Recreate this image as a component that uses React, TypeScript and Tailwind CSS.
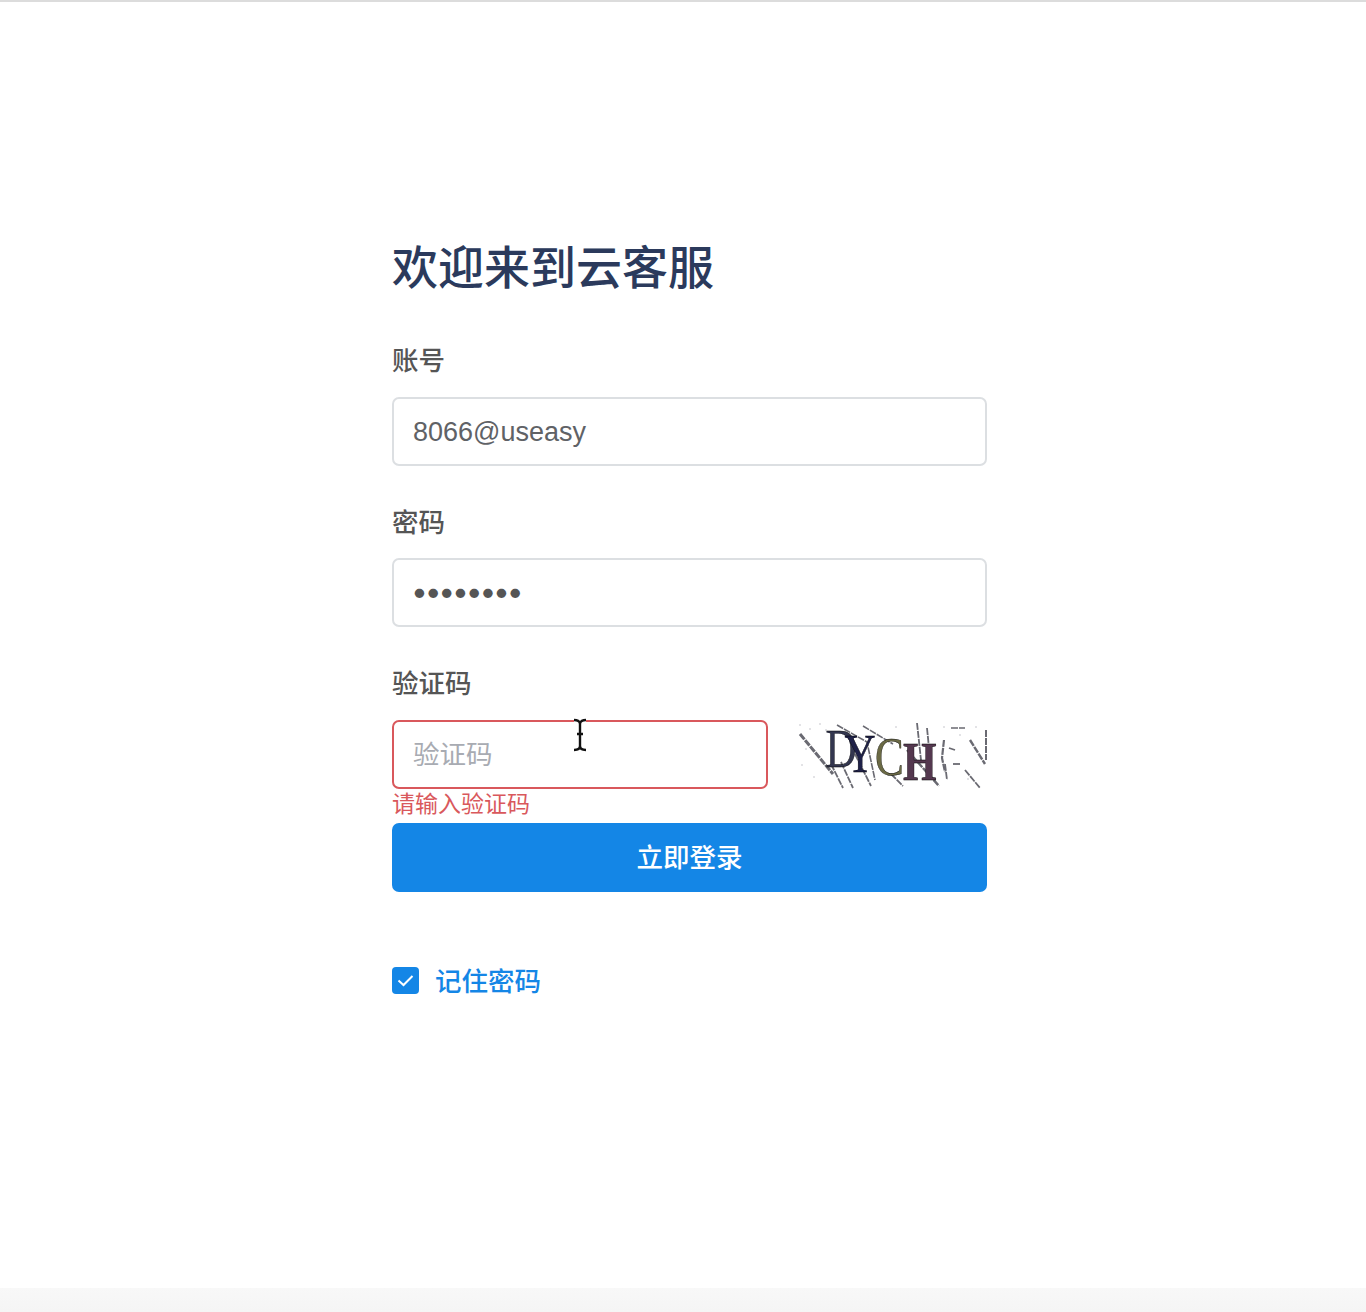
import React from 'react';

const FONT = '"Noto Sans CJK SC", "Liberation Sans", sans-serif';
const LATIN = '"Liberation Sans", sans-serif';

const Captcha: React.FC = () => (
  <svg width="192" height="69" viewBox="0 0 192 69" className="block blur-[0.7px]">
    {/* noise lines */}
    <g stroke="#6a6a72" fill="none" strokeWidth="1.8" strokeDasharray="7 1">
      <path d="M5 14 L38 54" strokeWidth="3" />
      <path d="M42 5 L72 22 L80 60" strokeWidth="1.6" />
      <path d="M68 6 L98 24" strokeWidth="1.6" />
      <path d="M36 44 L48 68" />
      <path d="M46 42 L58 68" />
      <path d="M60 34 L76 66" />
      <path d="M96 54 L108 66" />
      <path d="M122 3 L126 40" />
      <path d="M132 8 L136 48" />
      <path d="M112 30 L144 66" strokeWidth="2.4" />
      <path d="M158 44 H166" />
      <path d="M149 20 L147 38 L150 52" strokeWidth="2.2" />
      <path d="M150 44 L152 60" />
      <path d="M156 8 H170" strokeWidth="1.4" />
      <path d="M154 28 L160 30" />
      <path d="M175 20 L190 44" strokeWidth="2.4" />
      <path d="M191 10 V40" strokeWidth="2" />
      <path d="M170 50 L185 68" />
    </g>
    <g fill="#dcdce0" opacity="0.8">
      <rect x="4" y="4" width="2" height="2" /><rect x="14" y="8" width="2" height="2" /><rect x="24" y="3" width="2" height="2" />
      <rect x="10" y="28" width="2" height="2" /><rect x="6" y="44" width="2" height="2" /><rect x="18" y="56" width="2" height="2" />
      <rect x="148" y="6" width="2" height="2" /><rect x="180" y="6" width="2" height="2" /><rect x="172" y="58" width="2" height="2" />
      <rect x="30" y="9" width="2" height="2" /><rect x="100" y="6" width="2" height="2" /><rect x="164" y="14" width="2" height="2" />
    </g>
    <g transform="scale(0.8 1)" fontFamily='"Liberation Serif", serif' fontSize="54">
      <text x="38 62 100 135" y="47 52 55 60" stroke="currentColor" strokeWidth="0.4">
        <tspan fill="#33364f">D</tspan>
        <tspan fill="#1f2148">Y</tspan>
        <tspan fill="#6b6a45">C</tspan>
        <tspan fill="#54384f" fontWeight="700">H</tspan>
      </text>
    </g>
  </svg>
);

const App: React.FC = () => {
  return (
    <div className="min-h-[1312px] bg-white flex flex-col" style={{ fontFamily: FONT }}>
      <div className="h-[2px] bg-[#dcdcdc]" />
      <main className="flex-1 pl-[392px] pt-[232px]">
        <div className="w-[595px]">
          <h1 className="text-[46px] leading-[60px] font-medium text-[#2b3a5c] whitespace-nowrap">欢迎来到云客服</h1>

          <label className="block mt-[45px] text-[26.5px] leading-[40px] font-medium text-[#555]">账号</label>
          <input
            readOnly
            value="8066@useasy"
            className="block mt-[18px] w-full h-[69px] px-[19px] pt-[2px] border-2 border-[#dcdfe2] rounded-[7px] text-[27px] text-[#606266] outline-none"
            style={{ fontFamily: LATIN }}
          />

          <label className="block mt-[35px] text-[26.5px] leading-[40px] font-medium text-[#555]">密码</label>
          <input
            readOnly
            type="password"
            value="12345678"
            className="block mt-[17px] w-full h-[69px] pl-[17px] pr-[19px] pb-[4px] border-2 border-[#dcdfe2] rounded-[7px] text-[30px] tracking-[-3.2px] text-[#555] outline-none"
            style={{ fontFamily: '"Inter", sans-serif' }}
          />

          <label className="block mt-[35px] text-[26.5px] leading-[40px] font-medium text-[#555]">验证码</label>
          <div className="mt-[18px] flex items-center justify-between relative">
            <input
              readOnly
              placeholder="验证码"
              className="block w-[376px] h-[69px] pl-[19px] pr-[20px] pb-[5px] border-2 border-[#d9585c] rounded-[7px] text-[26.5px] outline-none placeholder:text-[#a8abb2]"
            />
            <Captcha />
            {/* text cursor */}
            <svg width="16" height="34" viewBox="0 0 16 34" className="absolute left-[180px] top-[-2px]">
              <path d="M2 2 C5 2 8 3 8 6 V28 C8 31 5 32 2 32 M14 2 C11 2 8 3 8 6 M8 28 C8 31 11 32 14 32 M5 16 H11" stroke="#fff" strokeWidth="4" fill="none" />
              <path d="M2 2 C5 2 8 3 8 6 V28 C8 31 5 32 2 32 M14 2 C11 2 8 3 8 6 M8 28 C8 31 11 32 14 32 M5 16 H11" stroke="#111" strokeWidth="2.4" fill="none" />
            </svg>
          </div>
          <p className="h-[34px] text-[23px] leading-[26px] text-[#d9585c]">请输入验证码</p>

          <button className="block w-full h-[69px] pb-[3px] rounded-[7px] bg-[#1486e6] text-white text-[26.5px] font-medium">立即登录</button>

          <div className="mt-[68px] flex items-center gap-[16px]">
            <span className="w-[27px] h-[27px] rounded-[4px] bg-[#1486e6] flex items-center justify-center">
              <svg width="17" height="13" viewBox="0 0 17 13" fill="none">
                <path d="M1.5 6.5 L6.5 11 L15.5 2" stroke="#fff" strokeWidth="2" />
              </svg>
            </span>
            <span className="text-[26.5px] leading-[40px] font-medium text-[#1486e6]">记住密码</span>
          </div>
        </div>
      </main>
      <div className="h-[24px] bg-gradient-to-b from-[#f8f8f8] to-[#f5f5f5]" />
    </div>
  );
};

export default App;
